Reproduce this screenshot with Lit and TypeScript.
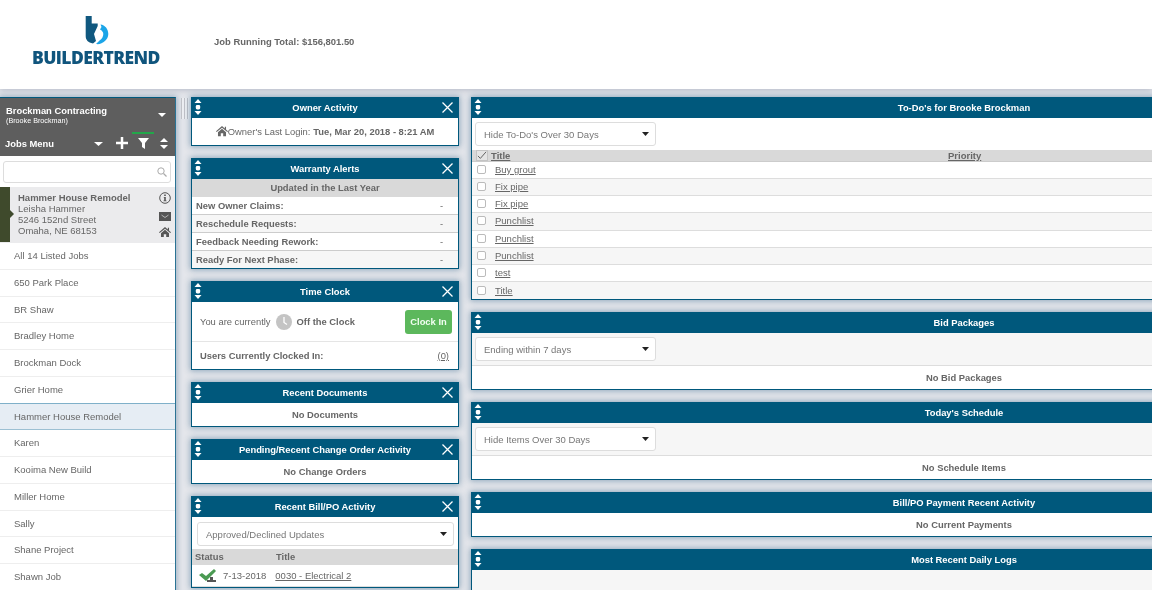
import { LitElement, html, css } from "lit";
import { customElement } from "lit/decorators.js";

const grip = html`<svg class="grip" viewBox="0 0 8 16" width="8" height="16"><path fill="#fff" d="M4 0 7.5 4H.5ZM4 16 .5 12h7Z"/><rect x="1.8" y="6" width="4.4" height="4.4" rx="1.4" fill="#fff"/></svg>`;
const closeX = html`<svg class="x" viewBox="0 0 11 11" width="11" height="11"><path d="M.5.5l10 10M10.5.5l-10 10" stroke="#fff" stroke-width="1.3"/></svg>`;
const home = (s: number, c: string) => html`<svg viewBox="0 0 14 12" width="${s}" height="${(s * 12) / 14}"><path fill="${c}" d="M7 0 0 6.2l.8.9L7 2l6.2 5.1.8-.9-2.3-2V.8H10.300v2L7 0ZM2.300 7.200V12h3.300V8.500h2.800V12h3.300V7.200L7 3.300Z"/></svg>`;
const caret = html`<svg class="caret" viewBox="0 0 7 4" width="7" height="4"><path fill="#222" d="M0 0h7L3.500 4Z"/></svg>`;

@customElement("dash-panel")
class DashPanel extends LitElement {
  static properties = { heading: { type: String } };
  heading = "";
  static styles = css`
    :host { display: block; background: #fff; border: 1px solid #00587c; border-top: 0; box-shadow: 0 0 6px 1px rgba(40, 90, 130, 0.45); overflow: hidden; }
    .head { height: 21px; background: #00587c; color: #fff; font: bold 9.400px/21px "Liberation Sans", sans-serif; text-align: center; position: relative; }
    .grip { position: absolute; left: 2px; top: 2px; }
    .x { position: absolute; right: 5px; top: 5px; }
  `;
  render() {
    return html`<div class="head">${grip}${this.heading}${closeX}</div><slot></slot>`;
  }
}

@customElement("app-root")
export class AppRoot extends LitElement {
  static styles = css`
    :host { display: block; width: 1152px; height: 590px; overflow: hidden; background: #e4e6eb; font: 9.400px "Liberation Sans", sans-serif; color: #666; filter: blur(0.4px); }
    * { box-sizing: border-box; }
    a { color: #666; text-decoration: underline; }
    .top { height: 89px; background: #fff; display: flex; box-shadow: 0 1px 6px rgba(90, 100, 130, 0.35); position: relative; z-index: 2; }
    .logo { width: 214px; display: flex; flex-direction: column; padding: 16px 0 0 32px; }
    .mark { margin-left: 53px; display: block; }
    .word { font: 800 17.500px/18px "Open Sans", sans-serif; color: #10557d; letter-spacing: -0.6px; margin-top: 3px; white-space: nowrap; }
    .total { font: bold 9.450px "Liberation Sans", sans-serif; color: #666; margin-top: 36px; }
    .main { display: flex; padding-top: 8px; align-items: flex-start; height: 501px; }
    .side { width: 176px; height: 501px; flex: none; background: #fff; border-right: 1px solid #2b7394; border-top: 1px solid #00587c; box-shadow: 0 0 6px 1px rgba(40, 90, 130, 0.4); overflow: hidden; }
    .gutter { width: 15px; flex: none; padding: 1px 0 0 5px; }
    .handle { width: 8px; height: 21px; background: repeating-linear-gradient(90deg, #bfc1c7 0 1px, #eceef2 1px 3px); }
    .col { flex: none; display: flex; flex-direction: column; }
    .mid { width: 268px; margin-right: 12px; gap: 12px; }
    .right { width: 986px; gap: 12px; }
    .brand { height: 58px; background: #5e5e5e; color: #fff; padding: 7px 5px 0 6px; position: relative; font-weight: bold; }
    .brand .b1 { font-size: 9.400px; line-height: 11px; }
    .brand .b2 { font-size: 7.200px; line-height: 9px; font-weight: normal; }
    .brand .menu { position: absolute; left: 5px; top: 39px; line-height: 13px; }
    .ic { position: absolute; display: block; }
    .search { height: 31px; padding: 5px 4px 0 3px; }
    .box { height: 22px; border: 1px solid #ddd; border-radius: 3px; display: flex; align-items: center; justify-content: flex-end; padding-right: 3px; }
    .cur { height: 56px; background: #ebebed; position: relative; padding: 5px 0 0 18px; line-height: 11px; color: #666; font-size: 9.500px; }
    .cur b { display: block; }
    .cur .flag { position: absolute; left: 0; top: 0; width: 10px; height: 55px; background: #3f4a2c; }
    .cur .flag::after { content: ""; position: absolute; left: 10px; top: 23px; border-left: 4px solid #3f4a2c; border-top: 4px solid transparent; border-bottom: 4px solid transparent; }
    .job { height: 26.750px; line-height: 26px; padding-left: 14px; font-size: 9.500px; border-bottom: 1px solid #eee; }
    .job.sel { background: #e6edf4; border-top: 1px solid #7fb0c9; border-bottom: 1px solid #9cc0d3; margin-top: -1px; height: 27.750px; }
    .center { text-align: center; font-weight: bold; line-height: 23px; height: 23px; }
    .login { height: 27px; display: flex; align-items: center; justify-content: center; }
    .login b { margin-left: 3px; }
    .sub { background: #d9d9d9; height: 18px; line-height: 18px; text-align: center; font-weight: bold; }
    .row { height: 18px; line-height: 17px; padding: 0 4px; display: flex; justify-content: space-between; font-weight: bold; border-bottom: 1px solid #ccc; }
    .row span { font-weight: normal; margin-right: 11px; }
    .row:last-child { border-bottom: 0; height: 17px; }
    .clock { height: 40px; display: flex; align-items: center; padding: 0 6px 0 8px; border-bottom: 1px solid #e5e5e5; }
    .clock svg { margin: 0 5px 0 5px; }
    .clock b { flex: 1; }
    .btn { width: 47px; height: 24px; background: #5cb85c; border-radius: 3px; text-align: center; line-height: 24px; font-weight: bold; color: #f2fff2; }
    .clocked { height: 27px; display: flex; justify-content: space-between; align-items: center; padding: 0 9px 0 8px; font-weight: bold; }
    .clocked a { font-weight: normal; }
    .sel-box { height: 24px; border: 1px solid #ddd; border-radius: 3px; background: #fff; display: flex; align-items: center; justify-content: space-between; padding: 0 6px 0 8px; color: #777; font-size: 9.500px; }
    .bill-bar { padding: 5px 4px 4px 5px; height: 32px; }
    .bill-head { background: #d9d9d9; height: 16px; line-height: 16px; font-weight: bold; padding-left: 3px; display: flex; }
    .bill-head span:first-child { width: 81px; }
    .bill-row { display: flex; align-items: center; height: 22px; padding-left: 7px; font-size: 9.500px; border-bottom: 1px solid #ddd; }
    .bill-row svg { margin-right: 5px; }
    .bill-row a { margin-left: 9px; }
    .tool { padding: 4px 0 0 3px; height: 32px; background: #f6f6f6; border-bottom: 1px solid #ddd; }
    .tool .sel-box { width: 181px; }
    .tool.plain { background: #fff; border-bottom: 0; }
    .tool.tall { height: 33px; }
    .todo-head { height: 12px; background: #d9d9d9; position: relative; font-weight: bold; line-height: 12px; padding-left: 19px; font-size: 9.500px; border-bottom: 1px solid #ccc; }
    .todo-head .pri { position: absolute; left: 476px; }
    .todo-head svg { position: absolute; left: 4px; top: 0; border: 1px solid #c4c4c4; background: #e4e4e4; }
    .todo { height: 17.150px; display: flex; align-items: center; padding: 0 0 1px 5px; border-bottom: 1px solid #ddd; font-size: 9.500px; }
    .todo:last-child { border-bottom: 0; }
    .cb { width: 9px; height: 9px; border: 1px solid #bbb; border-radius: 2px; background: #fff; margin-right: 9px; flex: none; }
    .logs { height: 40px; background: #f6f6f6; }
  `;

  render() {
    const jobs = ["All 14 Listed Jobs", "650 Park Place", "BR Shaw", "Bradley Home", "Brockman Dock", "Grier Home", "Hammer House Remodel", "Karen", "Kooima New Build", "Miller Home", "Sally", "Shane Project", "Shawn Job"];
    const todos = ["Buy grout", "Fix pipe", "Fix pipe", "Punchlist", "Punchlist", "Punchlist", "test", "Title"];
    return html`
      <div class="top">
        <div class="logo">
          <svg class="mark" width="24" height="29" viewBox="0 0 24 29">
            <path fill="#10587f" d="M.7 0H6.700V7.500H12.700V10L9 18 11 25 8 27.500C3 26.500.7 24 .7 20Z"/>
            <path fill="#1ba5e8" d="M15.500 8.500C20 9 23.300 13 23.300 18 23.300 24 17 29 11 28L14.500 24.500C17 23 18.300 20.500 18.300 18 18.300 16 17 14.500 15 13.500L16.500 11Z"/>
          </svg>
          <div class="word">BUILDERTREND</div>
        </div>
        <div class="total">Job Running Total: $156,801.50</div>
      </div>
      <div class="main">
        <div class="side">
          <div class="brand">
            <div class="b1">Brockman Contracting</div>
            <div class="b2">(Brooke Brockman)</div>
            <div class="menu">Jobs Menu</div>
            <svg class="ic" style="left:158px;top:15px" width="8" height="4" viewBox="0 0 8 4"><path fill="#fff" d="M0 0h8L4 4Z"/></svg>
            <svg class="ic" style="left:94px;top:44px" width="9" height="4" viewBox="0 0 9 4"><path fill="#fff" d="M0 0h9L4.500 4Z"/></svg>
            <svg class="ic" style="left:116px;top:39px" width="12" height="12" viewBox="0 0 12 12"><path stroke="#fff" stroke-width="2.500" d="M6 0v12M0 6h12"/></svg>
            <div class="ic" style="left:132px;top:34px;width:22px;height:2px;background:#22a74a"></div>
            <svg class="ic" style="left:138px;top:40px" width="11" height="11" viewBox="0 0 11 11"><path fill="#fff" d="M0 0h11L7 5v6L4 9V5Z"/></svg>
            <svg class="ic" style="left:160px;top:40px" width="8" height="11" viewBox="0 0 8 11"><path fill="#fff" d="M4 0 8 4H0ZM4 11 0 7h8Z"/></svg>
          </div>
          <div class="search"><div class="box"><svg width="10" height="10" viewBox="0 0 10 10"><circle cx="4" cy="4" r="3.200" fill="none" stroke="#aaa"/><path d="M6.500 6.500 9.500 9.500" stroke="#aaa" stroke-width="1.200"/></svg></div></div>
          <div class="cur">
            <div class="flag"></div>
            <b>Hammer House Remodel</b>Leisha Hammer<br />5246 152nd Street<br />Omaha, NE 68153
            <svg class="ic" style="left:159px;top:5px" width="12" height="12" viewBox="0 0 12 12"><circle cx="6" cy="6" r="5.300" fill="none" stroke="#555"/><path fill="#555" d="M5.200 2.500h1.600v1.500H5.200ZM4.800 5h2v3.500h.7v.8h-3v-.8h.7V5.800h-.4Z"/></svg>
            <svg class="ic" style="left:159px;top:25px" width="12" height="9" viewBox="0 0 12 9"><rect width="12" height="9" fill="#555"/><path d="M2.500 3 6 5.500 9.500 3" fill="none" stroke="#ddd" stroke-width=".7"/></svg>
            <div class="ic" style="left:159px;top:40px">${home(12, "#555")}</div>
          </div>
          ${jobs.map((j) => html`<div class="job ${j === "Hammer House Remodel" ? "sel" : ""}">${j}</div>`)}
        </div>
        <div class="gutter"><div class="handle"></div></div>
        <div class="col mid">
          <dash-panel heading="Owner Activity"><div class="login">${home(12, "#666")}Owner's Last Login: <b>Tue, Mar 20, 2018 - 8:21 AM</b></div></dash-panel>
          <dash-panel heading="Warranty Alerts">
            <div class="sub">Updated in the Last Year</div>
            <div>
              <div class="row" style="background:#fff">New Owner Claims:<span>-</span></div>
              <div class="row" style="background:#f6f6f6">Reschedule Requests:<span>-</span></div>
              <div class="row" style="background:#fff">Feedback Needing Rework:<span>-</span></div>
              <div class="row" style="background:#f6f6f6">Ready For Next Phase:<span>-</span></div>
            </div>
          </dash-panel>
          <dash-panel heading="Time Clock">
            <div class="clock">You are currently
              <svg width="16" height="16" viewBox="0 0 16 16"><circle cx="8" cy="8" r="8" fill="#c4c4c4"/><path d="M8 3v5.500l3 2" fill="none" stroke="#fff" stroke-width="1.300"/></svg>
              <b>Off the Clock</b><div class="btn">Clock In</div></div>
            <div class="clocked">Users Currently Clocked In:<a>(0)</a></div>
          </dash-panel>
          <dash-panel heading="Recent Documents"><div class="center">No Documents</div></dash-panel>
          <dash-panel heading="Pending/Recent Change Order Activity"><div class="center">No Change Orders</div></dash-panel>
          <dash-panel heading="Recent Bill/PO Activity">
            <div class="bill-bar"><div class="sel-box">Approved/Declined Updates ${caret}</div></div>
            <div class="bill-head"><span>Status</span><span>Title</span></div>
            <div class="bill-row">
              <svg width="19" height="16" viewBox="0 0 19 16"><path fill="#4a9a52" d="M0 7l3-2 4 3 8-7 2 2L7 13Z"/><path fill="#555" d="M11 9h3v3h3v2H8v-2h3Z"/></svg>
              7-13-2018 <a>0030 - Electrical 2</a></div>
          </dash-panel>
        </div>
        <div class="col right">
          <dash-panel heading="To-Do's for Brooke Brockman">
            <div class="tool plain"><div class="sel-box">Hide To-Do's Over 30 Days ${caret}</div></div>
            <div class="todo-head">
              <svg width="12" height="11" viewBox="0 0 12 11"><path d="M1 6l3 3 7-8" fill="none" stroke="#555" stroke-width="1.100"/></svg>
              <a>Title</a><a class="pri">Priority</a></div>
            <div>${todos.map((t, i) => html`<div class="todo" style="background:${i % 2 ? "#f6f6f6" : "#fff"}"><span class="cb"></span><a>${t}</a></div>`)}</div>
          </dash-panel>
          <dash-panel heading="Bid Packages">
            <div class="tool tall"><div class="sel-box">Ending within 7 days ${caret}</div></div>
            <div class="center">No Bid Packages</div>
          </dash-panel>
          <dash-panel heading="Today's Schedule">
            <div class="tool tall"><div class="sel-box">Hide Items Over 30 Days ${caret}</div></div>
            <div class="center">No Schedule Items</div>
          </dash-panel>
          <dash-panel heading="Bill/PO Payment Recent Activity"><div class="center">No Current Payments</div></dash-panel>
          <dash-panel heading="Most Recent Daily Logs"><div class="logs"></div></dash-panel>
        </div>
      </div>
    `;
  }
}
